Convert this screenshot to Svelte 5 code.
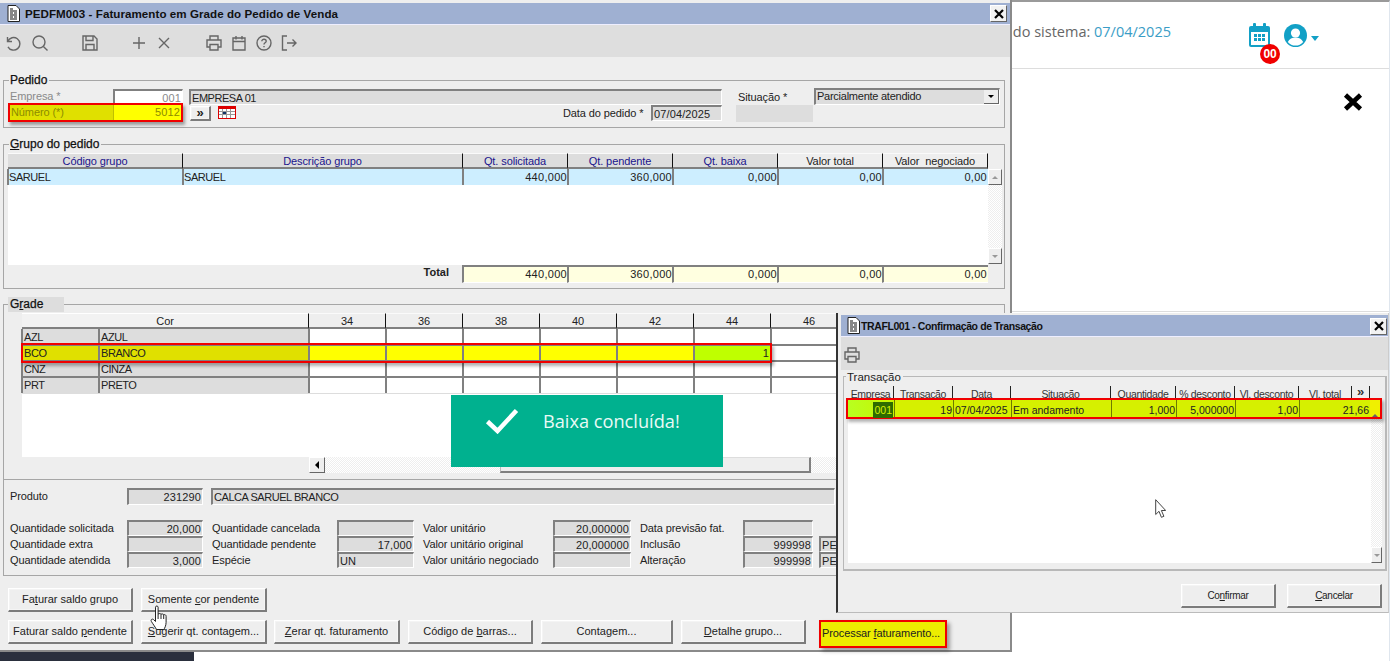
<script>
  const grupoHead = [
    { t: 'Código grupo', blue: true },
    { t: 'Descrição grupo', blue: true },
    { t: 'Qt. solicitada', blue: true },
    { t: 'Qt. pendente', blue: true },
    { t: 'Qt. baixa', blue: true },
    { t: 'Valor total', blue: false },
    { t: 'Valor  negociado', blue: false }
  ];
  const grupoNums = ['440,000', '360,000', '0,000', '0,00', '0,00'];
  const sizes = ['34', '36', '38', '40', '42', '44', '46'];
  const cores = [
    { c: 'AZL', n: 'AZUL', hl: false },
    { c: 'BCO', n: 'BRANCO', hl: true },
    { c: 'CNZ', n: 'CINZA', hl: false },
    { c: 'PRT', n: 'PRETO', hl: false }
  ];
  const detalhe = [
    ['Quantidade solicitada', '20,000', 'Quantidade cancelada', '', 'Valor unitário', '20,000000', 'Data previsão fat.', '', ''],
    ['Quantidade extra', '', 'Quantidade pendente', '17,000', 'Valor unitário original', '20,000000', 'Inclusão', '999998', 'PE'],
    ['Quantidade atendida', '3,000', 'Espécie', 'UN', 'Valor unitário negociado', '', 'Alteração', '999998', 'PE']
  ];
  const transHead = ['Empresa', 'Transação', 'Data', 'Situação', 'Quantidade', '% desconto', 'Vl. desconto', 'Vl. total', '»'];
</script>

<div class="desk">
  <div class="page">
    <header class="page-top">
      <span class="sys">Data do sistema: <span class="sys-date">07/04/2025</span></span>
      <span class="cal">
        <svg width="24" height="25" viewBox="0 0 24 25">
          <rect x="1" y="3" width="21" height="21" rx="2" fill="#12a0c6" />
          <rect x="3" y="9" width="17" height="13" fill="#fff" />
          <rect x="5" y="0" width="3" height="6" rx="1" fill="#12a0c6" />
          <rect x="15" y="0" width="3" height="6" rx="1" fill="#12a0c6" />
          <g fill="#12a0c6">
            <rect x="6" y="11" width="3" height="3" /><rect x="10" y="11" width="3" height="3" /><rect x="14" y="11" width="3" height="3" />
            <rect x="6" y="15" width="3" height="3" /><rect x="10" y="15" width="3" height="3" /><rect x="14" y="15" width="3" height="3" />
          </g>
        </svg>
        <span class="badge">00</span>
      </span>
      <svg class="user" width="23" height="23" viewBox="0 0 23 23">
        <circle cx="11.5" cy="11.5" r="11.5" fill="#12a0c6" />
        <circle cx="11.5" cy="9" r="4.6" fill="#fff" />
        <path d="M3.8 18c1.5-3.4 4.4-4.6 7.7-4.6s6.200 1.200 7.700 4.600a10 10 0 0 1-15.400 0z" fill="#fff" />
      </svg>
      <span class="caret"></span>
    </header>
    <div class="page-sub">
      <svg width="20" height="18" viewBox="0 0 20 18"><path d="M2.500 2l15 14M17.500 2l-15 14" stroke="#000" stroke-width="4.600" /></svg>
    </div>
    <div class="sidebar-stub"></div>
  </div>

  <section class="win main-win">
    <div class="title">
      <svg class="doc" width="13" height="17" viewBox="0 0 13 17">
        <path d="M1 .5h8l3.500 3.500v12.500H1z" fill="#fff" stroke="#222" />
        <path d="M3 4h3M3 6h7M3 8h3M7 8h3M3 10h7M3 12h3M7 12h3M3 14h7" stroke="#111" stroke-width="1.200" />
      </svg>
      <span class="title-text">PEDFM003 - Faturamento em Grade do Pedido de Venda</span>
      <span class="close">
        <svg width="10" height="10" viewBox="0 0 10 10"><path d="M1 1l8 8M9 1L1 9" stroke="#000" stroke-width="2.200" /></svg>
      </span>
    </div>

    <div class="toolbar">
      <div class="tgroup g1">
        <svg class="ti" viewBox="0 0 16 16"><path d="M2.500 2v4.500H7M2.800 6.300A6.300 6.300 0 1 1 3 11.800" /></svg>
        <svg class="ti" viewBox="0 0 16 16"><circle cx="7" cy="7" r="6" /><path d="M11.400 11.400L15.500 15.500" /></svg>
      </div>
      <div class="tgroup g2">
        <svg class="ti" viewBox="0 0 16 16"><path d="M1 1h11l3 3v11H1zM4 1v4.500h7V1M4 15V9.500h8V15" /></svg>
      </div>
      <div class="tgroup g3">
        <svg class="ti" viewBox="0 0 16 16"><path d="M8 2v12M2 8h12" /></svg>
        <svg class="ti" viewBox="0 0 16 16"><path d="M3 3l10 10M13 3L3 13" /></svg>
      </div>
      <div class="tgroup g4">
        <svg class="ti" viewBox="0 0 16 16"><path d="M4 5V1h8v4M4 12H1V5h14v7h-3M4 9.500h8V15H4z" /></svg>
        <svg class="ti" viewBox="0 0 16 16"><path d="M2 3h12v12H2zM2 6.500h12M5 1v3.500M11 1v3.500" /></svg>
        <svg class="ti" viewBox="0 0 16 16"><circle cx="8" cy="8" r="7" /><path d="M5.800 6.300C5.800 4.800 7 4.200 8 4.200s2.200.6 2.200 2c0 1.600-2.200 1.600-2.200 3.300M8 11v1.300" /></svg>
        <svg class="ti" viewBox="0 0 16 16"><path d="M6 1H1.500v14H6M6 8h9M11.500 4.500L15 8l-3.500 3.500" /></svg>
      </div>
    </div>

    <div class="box box-pedido">
      <span class="legend">Pedido</span>
      <div class="ped-r1">
        <span class="lbl muted emp">Empresa *</span>
        <span class="fld white r muted">001</span>
        <span></span>
        <span class="fld caps">EMPRESA 01</span>
        <span></span>
        <span class="lbl">Situação *</span>
        <span class="fld select">Parcialmente atendido<span class="drop"><i></i></span></span>
      </div>
      <div class="ped-r2">
        <div class="num-frame">
          <span class="lbl num-lbl">Número (*)</span>
          <span class="num-val">5012</span>
        </div>
        <span></span>
        <span class="btn mini">»</span>
        <span></span>
        <span class="calbtn">
          <svg width="18" height="13" viewBox="0 0 18 13">
            <rect x=".5" y=".5" width="17" height="12" fill="#fff" stroke="#d00" />
            <rect x="1" y="1" width="16" height="2" fill="#d00" />
            <path d="M1 5.500h16M1 8.500h16M4.500 3v9M8.500 3v9M12.500 3v9" stroke="#999" />
            <rect x="5" y="6" width="3" height="2" fill="#136" />
          </svg>
        </span>
        <span></span>
        <span class="lbl">Data do pedido *</span>
        <span></span>
        <span class="fld">07/04/2025</span>
        <span></span>
        <span class="plain-gray"></span>
      </div>
    </div>

    <div class="box box-grupo">
      <span class="legend"><u>G</u>rupo do pedido</span>
      <div class="gr-cols gr-head">
        {#each grupoHead as h}
          <span class="hcell" class:blue={h.blue}>{h.t}</span>
        {/each}
      </div>
      <div class="gr-body">
        <div class="gr-white">
          <div class="gr-cols gr-row">
            <span class="cell caps">SARUEL</span>
            <span class="cell caps">SARUEL</span>
            {#each grupoNums as n}
              <span class="cell r wide">{n}</span>
            {/each}
          </div>
        </div>
        <div class="vscroll">
          <span class="sbtn"><i class="up"></i></span>
          <span class="sbtn"><i class="down"></i></span>
        </div>
      </div>
      <div class="tot-row">
        <span class="tot-lbl">Total</span>
        {#each grupoNums as n}
          <span class="tot r">{n}</span>
        {/each}
      </div>
    </div>

    <div class="box box-grade">
      <span class="legend legend-grade">G<u>r</u>ade</span>
      <div class="grade">
        <div class="gd-cols">
          <span class="hcell cor">Cor</span>
          {#each sizes as s}
            <span class="hcell">{s}</span>
          {/each}
        </div>
        {#each cores as c}
          <div class="gd-cols gd-row" class:hl={c.hl}>
            <span class="cell grey caps">{c.c}</span>
            <span class="cell grey caps">{c.n}</span>
            {#each sizes as s}
              <span class="cell r val" class:lime={c.hl && s === '44'} class:off={s === '46'}>{c.hl && s === '44' ? '1' : ''}</span>
            {/each}
          </div>
        {/each}
        <div class="gd-blank"></div>
        <div class="hl-frame"></div>
      </div>
      <div class="hscroll">
        <span class="sbtn hbtn"><i class="left"></i></span>
        <span class="track"></span>
        <span class="thumb"></span>
        <span class="track"></span>
      </div>
    </div>

    <div class="box box-prod">
      <div class="prod-row">
        <span class="lbl">Produto</span>
        <span class="fld r">231290</span>
        <span class="fld prod-name caps">CALCA SARUEL BRANCO</span>
      </div>
      <div class="det">
        {#each detalhe as d}
          <span class="lbl">{d[0]}</span>
          <span class="fld r">{d[1]}</span>
          <span class="lbl pad">{d[2]}</span>
          <span class="fld" class:r={d[3] !== 'UN'}>{d[3]}</span>
          <span class="lbl pad">{d[4]}</span>
          <span class="fld r">{d[5]}</span>
          <span class="lbl pad">{d[6]}</span>
          <span class="fld r">{d[7]}</span>
          {#if d[8]}
            <span class="fld tail">{d[8]}</span>
          {:else}
            <span></span>
          {/if}
        {/each}
      </div>
    </div>

    <div class="btns1">
      <span class="btn">Fa<u>t</u>urar saldo grupo</span>
      <span class="btn">Somente <u>c</u>or pendente</span>
    </div>
    <div class="btns2">
      <span class="btn">Faturar saldo <u>p</u>endente</span>
      <span class="btn"><u>S</u>ugerir qt. contagem...</span>
      <span class="btn"><u>Z</u>erar qt. faturamento</span>
      <span class="btn">Código de <u>b</u>arras...</span>
      <span class="btn">Conta<u>g</u>em...</span>
      <span class="btn"><u>D</u>etalhe grupo...</span>
      <span class="btn proc">Processar <u>f</u>aturamento...</span>
    </div>
  </section>

  <div class="toast">
    <svg width="34" height="26" viewBox="0 0 34 26"><path d="M2.500 13.500L12.500 23 31.500 2.500" fill="none" stroke="#fff" stroke-width="4.500" /></svg>
    <span>Baixa concluída!</span>
  </div>

  <section class="win trans-win">
    <div class="title t2">
      <svg class="doc" width="13" height="17" viewBox="0 0 13 17">
        <path d="M1 .5h8l3.500 3.500v12.500H1z" fill="#fff" stroke="#222" />
        <path d="M3 4h3M3 6h7M3 8h3M7 8h3M3 10h7M3 12h3M7 12h3M3 14h7" stroke="#111" stroke-width="1.200" />
      </svg>
      <span class="title-text small">TRAFL001 - Confirmação de Transação</span>
      <span class="close">
        <svg width="10" height="10" viewBox="0 0 10 10"><path d="M1 1l8 8M9 1L1 9" stroke="#000" stroke-width="2.200" /></svg>
      </span>
    </div>
    <div class="toolbar t2bar">
      <svg class="ti" viewBox="0 0 16 16"><path d="M4 5V1h8v4M4 12H1V5h14v7h-3M4 9.500h8V15H4z" /></svg>
    </div>
    <div class="box box-trans">
      <span class="legend legend-trans">Transação</span>
      <div class="tr-cols tr-head">
        {#each transHead as h}
          <span class="thead">{h}</span>
        {/each}
      </div>
      <div class="tr-frame">
        <div class="tr-row">
          <span class="tc first"><b>001</b></span>
          <span class="tc r">19</span>
          <span class="tc">07/04/2025</span>
          <span class="tc">Em andamento</span>
          <span class="tc r">1,000</span>
          <span class="tc r">5,000000</span>
          <span class="tc r">1,00</span>
          <span class="tc r">21,66</span>
          <span class="tc-sb"><i class="up"></i></span>
        </div>
      </div>
      <div class="tr-white">
        <span class="tr-track"></span>
        <span class="sbtn tr-down"><i class="down"></i></span>
      </div>
    </div>
    <div class="tr-btns">
      <span class="btn">Co<u>n</u>firmar</span>
      <span class="btn"><u>C</u>ancelar</span>
    </div>
  </section>

  <svg class="cursor hand" width="19" height="26" viewBox="0 0 19 26">
    <path d="M5.500 2.200c0-1.600 2.600-1.600 2.600 0V9c1.200-.6 2.300-.6 2.900.3 1.100-.6 2.200-.4 2.700.5 1.100-.5 2.400.1 2.400 1.500v6c0 3.500-1.600 6-2.200 7.200H6.500C5.500 22.500 3.200 19.400 1.400 16.500c-1.100-1.800.9-3.200 2.300-1.800l1.800 1.800z" fill="#fff" stroke="#222" stroke-width="1" />
    <path d="M8.100 9v5M11 9.300V14M13.700 9.800V14" stroke="#222" fill="none" />
  </svg>
  <svg class="cursor arrow" width="11" height="20" viewBox="0 0 11 20">
    <path d="M.7.700V15.500L4 12.300l2.400 6 2.500-1-2.500-5.800h4.300z" fill="#fff" stroke="#444" />
  </svg>
</div>

<style>
  :global(body) {
    margin: 0;
    background: #fff;
    overflow: hidden;
  }

  .desk {
    position: relative;
    width: 1393px;
    height: 661px;
    overflow: hidden;
    font-family: "Liberation Sans", Arial, sans-serif;
    font-size: 11px;
    color: #222;
  }

  /* page behind the windows */
  .page {
    height: 661px;
    width: 1390px;
    border-top: 2px solid #9a9a9a;
    border-right: 1px solid #dfe6ee;
    box-sizing: border-box;
    background: #fff;
  }
  .page-top {
    height: 66px;
    display: flex;
    align-items: flex-start;
    justify-content: flex-end;
    border-bottom: 1px solid #ddd;
    box-sizing: content-box;
    padding-right: 70px;
  }
  .sys {
    font-family: "Open Sans", sans-serif;
    font-size: 14.500px;
    color: #666;
    margin-top: 20px;
    margin-right: 77px;
  }
  .sys-date { color: #3a9dc6; }
  .cal {
    position: relative;
    display: block;
    width: 24px;
    height: 25px;
    margin-top: 21px;
    margin-right: 12px;
  }
  .badge {
    position: absolute;
    left: 12px;
    top: 21px;
    width: 20px;
    height: 20px;
    border-radius: 50%;
    background: #f00000;
    color: #fff;
    font-weight: bold;
    font-size: 12px;
    line-height: 20px;
    text-align: center;
    letter-spacing: -0.2px;
  }
  .user { margin-top: 22px; }
  .caret {
    margin-top: 34px;
    margin-left: 4px;
    border: 4px solid transparent;
    border-top: 5px solid #12a0c6;
    border-bottom: 0;
  }
  .page-sub {
    height: 243px;
    display: flex;
    justify-content: flex-end;
    align-items: flex-start;
    padding: 24px 26px 0 0;
    box-sizing: border-box;
    border-bottom: 1px solid #ddd;
  }
  .sidebar-stub {
    position: absolute;
    left: 0;
    bottom: 0;
    width: 194px;
    height: 9px;
    background: #2a2f3d;
  }

  /* windows */
  .win {
    position: absolute;
    box-sizing: border-box;
    background: #eee;
  }
  .main-win {
    left: 0;
    top: 0;
    width: 1012px;
    height: 652px;
    padding-top: 3px;
    border-right: 2px solid #8a8a8a;
    border-bottom: 2px solid #8a8a8a;
    background: #eee;
  }
  .title {
    height: 22px;
    background: #9fb0d2;
    display: flex;
    align-items: center;
    padding-left: 7px;
    border-bottom: 1px solid #eef;
    box-sizing: border-box;
  }
  .title-text {
    font-weight: bold;
    font-size: 11.600px;
    letter-spacing: 0.05px;
    color: #111;
    margin-left: 5px;
    flex: 1;
  }
  .close {
    width: 17px;
    height: 17px;
    margin-right: 3px;
    background: #f2f2f2;
    border: 1px solid #fff;
    border-right: 1px solid #666;
    border-bottom: 1px solid #666;
    box-sizing: border-box;
    display: flex;
    align-items: center;
    justify-content: center;
  }
  .toolbar {
    height: 32px;
    background: #dedede;
    display: flex;
    align-items: center;
    padding: 3px 0 0 5px;
    box-sizing: border-box;
  }
  .tgroup { display: flex; }
  .g1 { gap: 11px; }
  .g2 { margin-left: 34px; }
  .g3 { margin-left: 33px; gap: 9px; }
  .g4 { margin-left: 34px; gap: 9px; }
  .ti {
    width: 16px;
    height: 16px;
    fill: none;
    stroke: #666;
    stroke-width: 1.400;
  }

  .box {
    position: relative;
    box-sizing: border-box;
    border: 1px solid #a6a6a6;
    margin-left: 3px;
    width: 1002px;
  }
  .legend {
    position: absolute;
    left: 5px;
    top: -8px;
    height: 15px;
    line-height: 15px;
    padding: 0 2px 0 1px;
    background: #eee;
    font-size: 12px;
    color: #111;
    -webkit-text-stroke: 0.25px #111;
  }
  .lbl {
    line-height: 16px;
    white-space: nowrap;
    letter-spacing: -0.1px;
  }
  .muted { color: #8a8a8a; }
  .emp { padding-left: 2px; line-height: 15px; }
  .fld {
    box-sizing: border-box;
    display: block;
    height: 16px;
    line-height: 15px;
    background: #ddd;
    border-top: 2px solid #808080;
    border-left: 2px solid #808080;
    border-right: 1px solid #fff;
    border-bottom: 1px solid #fff;
    padding: 0 1px;
    white-space: nowrap;
    overflow: hidden;
    letter-spacing: 0.12px;
  }
  .fld.caps, .cell.caps { letter-spacing: -0.45px; }
  .white { background: #fff; }
  .r { text-align: right; }
  .plain-gray { background: #ddd; display: block; }

  .box-pedido { margin-top: 23px; height: 48px; padding: 8px 0 0 4px; }
  .ped-r1 {
    display: grid;
    grid-template-columns: 105px 70px 6px 533px 16px 76px 186px;
    height: 16px;
  }
  .ped-r1 .fld.muted { color: #8a8a8a; }
  .select { position: relative; height: 17px; margin-top: -1px; letter-spacing: -0.25px; line-height: 13px; }
  .drop {
    position: absolute;
    right: 0;
    top: 0;
    width: 15px;
    height: 14px;
    background: #eee;
    border-right: 1px solid #666;
    border-bottom: 1px solid #666;
    box-sizing: border-box;
    display: flex;
    align-items: center;
    justify-content: center;
  }
  .drop i {
    border: 3px solid transparent;
    border-top: 3px solid #000;
    border-bottom: 0;
  }
  .ped-r2 {
    display: grid;
    grid-template-columns: 175px 7px 21px 8px 20px 324px 80px 8px 71px 14px 77px;
    height: 16px;
  }
  .num-frame {
    display: grid;
    grid-template-columns: 103px 68px;
    position: relative;
    z-index: 1;
    height: 19px;
    margin-top: -2px;
    box-sizing: border-box;
    border: 2px solid #f00000;
    box-shadow: 2px 3px 3px rgba(0, 0, 0, .35);
  }
  .num-lbl { background: #e0e000; color: #8c8c00; line-height: 15px; padding-left: 1px; }
  .num-val { background: #ffff00; color: #8c8c00; text-align: right; line-height: 15px; padding-right: 1px; border-left: 1px solid #c0c000; letter-spacing: 0.12px; }
  .btn {
    box-sizing: border-box;
    display: block;
    text-align: center;
    line-height: 21px;
    background: #eee;
    border-top: 1px solid #fff;
    border-left: 1px solid #fff;
    border-right: 2px solid #7c7c7c;
    border-bottom: 2px solid #7c7c7c;
    box-shadow: inset 0 0 0 1px #f4f4f4;
    white-space: nowrap;
    color: #222;
  }
  .mini { height: 15px; margin-top: 1px; font-size: 13px; font-weight: bold; line-height: 11px; }
  .calbtn { display: block; margin-top: 1px; margin-left: -1px; line-height: 0; }

  .box-grupo { margin-top: 16px; height: 145px; padding: 8px 0 0 4px; }
  .gr-cols {
    display: grid;
    grid-template-columns: 175px 280px 105px 105px 105px 105px 105px;
    width: 980px;
  }
  .gr-head { height: 16px; }
  .hcell {
    display: block;
    box-sizing: border-box;
    height: 16px;
    line-height: 15px;
    text-align: center;
    background: #eee;
    border-top: 1px solid #fafafa;
    border-right: 1px solid #111;
    border-bottom: 2px solid #808080;
    white-space: pre;
    letter-spacing: -0.1px;
  }
  .hcell.blue { background: #ddd; color: #1a148c; }
  .gr-body { display: flex; height: 96px; }
  .gr-white { width: 980px; background: #fff; }
  .gr-row { height: 16px; }
  .cell {
    display: block;
    box-sizing: border-box;
    height: 16px;
    line-height: 16px;
    border-left: 2px solid #808080;
    margin-left: -1px;
    padding: 0 1px 0 0;
    background: #cdeeff;
    white-space: nowrap;
    letter-spacing: 0.12px;
  }
  .wide { letter-spacing: 0.3px; }
  .vscroll {
    width: 14px;
    display: flex;
    flex-direction: column;
    justify-content: space-between;
    height: 95px;
    background: repeating-conic-gradient(#eee 0 25%, #fff 0 50%) 0 0 / 2px 2px;
  }
  .sbtn {
    display: flex;
    align-items: center;
    justify-content: center;
    box-sizing: border-box;
    width: 14px;
    height: 16px;
    background: #eee;
    border-top: 1px solid #fff;
    border-left: 1px solid #fff;
    border-right: 1px solid #666;
    border-bottom: 1px solid #666;
  }
  .up, .down, .left { display: block; border: 3px solid transparent; }
  .up { border-bottom: 3px solid #999; border-top: 0; }
  .down { border-top: 3px solid #999; border-bottom: 0; }
  .left { border: 4px solid transparent; border-right: 4px solid #000; border-left: 0; }
  .tot-row {
    display: grid;
    grid-template-columns: 455px 105px 105px 105px 105px 105px;
    height: 16px;
    width: 980px;
  }
  .tot-lbl {
    text-align: right;
    font-weight: bold;
    padding-right: 14px;
    line-height: 15px;
    font-size: 11px;
  }
  .tot {
    display: block;
    box-sizing: border-box;
    background: #ffffe0;
    border-left: 2px solid #808080;
    border-top: 2px solid #808080;
    border-bottom: 1px solid #fff;
    margin-left: -1px;
    padding: 0 1px 0 0;
    line-height: 15px;
    letter-spacing: 0.3px;
  }

  .box-grade { margin-top: 15px; height: 176px; padding: 8px 0 0 18px; }
  .legend-grade {
    left: 4px;
    width: 56px;
    background: #ddd;
    box-sizing: border-box;
    padding-left: 2px;
  }
  .grade {
    position: relative;
    width: 826px;
    background: #fff;
    height: 144px;
  }
  .gd-cols {
    display: grid;
    grid-template-columns: 77px 210px repeat(7, 77px);
    height: 16px;
  }
  .cor { grid-column: span 2; border-top-color: #fff; background: #f2f2f2; }
  .grey { background: #ddd; padding-left: 1px; }
  .gd-row + .gd-row .cell {
    border-top: 2px solid #808080;
    margin-top: -1px;
    height: 17px;
    line-height: 15px;
  }
  .val { background: #fff; }
  .hl .grey { background: #e0e000; }
  .hl .val { background: #ffff00; }
  .hl .val.lime { background: #bfff00; padding-right: 2px; }
  .hl .val.off { background: #fff; }
  .gd-blank { height: 64px; border-top: 1px solid #ddd; }
  .hl-frame {
    position: absolute;
    left: -1px;
    top: 30px;
    width: 751px;
    height: 20px;
    box-sizing: border-box;
    border: 2px solid #f00000;
    box-shadow: 2px 3px 3px rgba(0, 0, 0, .3);
  }
  .hscroll {
    display: grid;
    grid-template-columns: 16px 175px 311px 25px;
    margin-left: 287px;
    width: 527px;
    height: 16px;
  }
  .hbtn { width: 16px; }
  .track { background: repeating-conic-gradient(#eee 0 25%, #fff 0 50%) 0 0 / 2px 2px; }
  .thumb {
    background: #eee;
    border-top: 1px solid #ddd;
    border-left: 1px solid #bbb;
    border-right: 2px solid #808080;
    border-bottom: 2px solid #808080;
    box-sizing: border-box;
  }

  .box-prod {
    height: 97px;
    margin-top: -1px;
    padding: 8px 0 0 6px;
  }
  .prod-row {
    display: grid;
    grid-template-columns: 117px 76px 8px 624px;
    height: 17px;
  }
  .prod-row .fld { height: 17px; }
  .prod-row .prod-name { grid-column: 4; }
  .det {
    display: grid;
    grid-template-columns: 117px 76px 134px 77px 139px 78px 112px 70px 70px;
    grid-auto-rows: 16px;
    margin-top: 15px;
  }
  .pad { padding-left: 9px; }
  .tail { margin-left: 6px; }

  .btns1, .btns2 { display: grid; margin-left: 8px; column-gap: 8px; }
  .btns1 {
    grid-template-columns: 125px 126px;
    height: 23px;
    margin-top: 12px;
  }
  .btns2 {
    grid-template-columns: 125px 126px 125px 125px 132px 125px;
    height: 23px;
    margin-top: 9px;
  }
  .btns2 .btn:nth-child(3) { margin-left: -1px; }
  .proc {
    position: absolute;
    left: 819px;
    top: 620px;
    width: 128px;
    height: 28px;
    line-height: 23px;
    background: #eded00;
    border: 2px solid #f00000;
    box-shadow: 3px 3px 4px rgba(0, 0, 0, .35);
    color: #222;
    letter-spacing: -0.1px;
    text-align: left;
    padding-left: 1px;
  }

  .toast {
    position: absolute;
    left: 451px;
    top: 395px;
    width: 272px;
    height: 72px;
    background: #00b18f;
    color: #eafaf6;
    display: flex;
    align-items: flex-start;
    font-family: "Open Sans", sans-serif;
    font-size: 18.200px;
    box-sizing: border-box;
    padding: 13px 0 0 34px;
  }
  .toast svg { margin-right: 24px; }
  .toast span { line-height: 26px; }

  /* confirmation window */
  .trans-win {
    left: 836px;
    top: 313px;
    width: 553px;
    height: 300px;
    border-left: 2px solid #333;
    border-right: 1px solid #ccc;
    border-bottom: 1px solid #bbb;
    padding: 2px 0 0 3px;
    font-size: 10.500px;
  }
  .t2 { padding-left: 6px; }
  .t2 .close { margin-right: 1px; margin-top: 1px; }
  .title-text.small { font-size: 10.500px; letter-spacing: -0.4px; margin-left: 1px; }
  .t2bar { height: 33px; padding-left: 3px; }
  .box-trans {
    width: 544px;
    margin: 6px 0 0 2px;
    height: 195px;
    padding: 9px 0 0 4px;
    border-color: #b8b8b8;
    border-width: 1px 2px 2px 1px;
  }
  .legend-trans { left: 2px; top: -7px; -webkit-text-stroke: 0; font-size: 11.500px; color: #222; }
  .tr-cols {
    display: grid;
    grid-template-columns: 46px 59px 58px 100px 65px 59px 64px 53px 18px;
    width: 522px;
  }
  .tr-head { height: 12px; }
  .thead {
    display: block;
    box-sizing: border-box;
    text-align: center;
    border-right: 1px solid #222;
    line-height: 16px;
    height: 12px;
    white-space: nowrap;
    color: #333;
    letter-spacing: -0.35px;
  }
  .thead:last-child { font-size: 13px; font-weight: bold; line-height: 12px; letter-spacing: 0; }
  .tr-frame {
    position: relative;
    z-index: 1;
    box-sizing: border-box;
    height: 21px;
    width: 536px;
    margin-left: -2px;
    border: 2px solid #f00000;
    background: #d6f000;
    box-shadow: 2px 3px 3px rgba(0, 0, 0, .3);
  }
  .tr-row {
    display: grid;
    grid-template-columns: 46px 59px 58px 100px 65px 59px 64px 71px 10px;
    height: 17px;
  }
  .tc {
    display: block;
    box-sizing: border-box;
    height: 17px;
    line-height: 20px;
    border-left: 1px solid #6f7a00;
    padding: 0 1px;
    white-space: nowrap;
  }
  .tc:first-child { border-left: 0; }
  .first {
    text-align: right;
    background: linear-gradient(90deg, #b8ff20, #c8f400);
  }
  .first b {
    font-weight: normal;
    background: #2e6b00;
    color: #d6f000;
    padding: 2px 1px;
  }
  .tc-sb {
    background: #f0f000;
    display: flex;
    justify-content: center;
    padding-top: 5px;
    box-sizing: border-box;
  }
  .tc-sb .up { border-bottom-color: #666; }
  .tr-white {
    display: flex;
    flex-direction: column;
    align-items: flex-end;
    width: 534px;
    height: 144px;
    background: #fff;
  }
  .tr-track {
    width: 11px;
    flex: 1;
    background: repeating-conic-gradient(#eee 0 25%, #fff 0 50%) 0 0 / 2px 2px;
  }
  .tr-down { width: 11px; }
  .tr-btns {
    display: grid;
    grid-template-columns: 95px 95px;
    column-gap: 11px;
    height: 23px;
    margin: 13px 0 0 340px;
  }
  .tr-btns .btn { font-size: 10px; letter-spacing: -0.3px; }

  .cursor { position: absolute; pointer-events: none; }
  .hand { left: 150px; top: 605px; }
  .arrow { left: 1155px; top: 499px; }
</style>
